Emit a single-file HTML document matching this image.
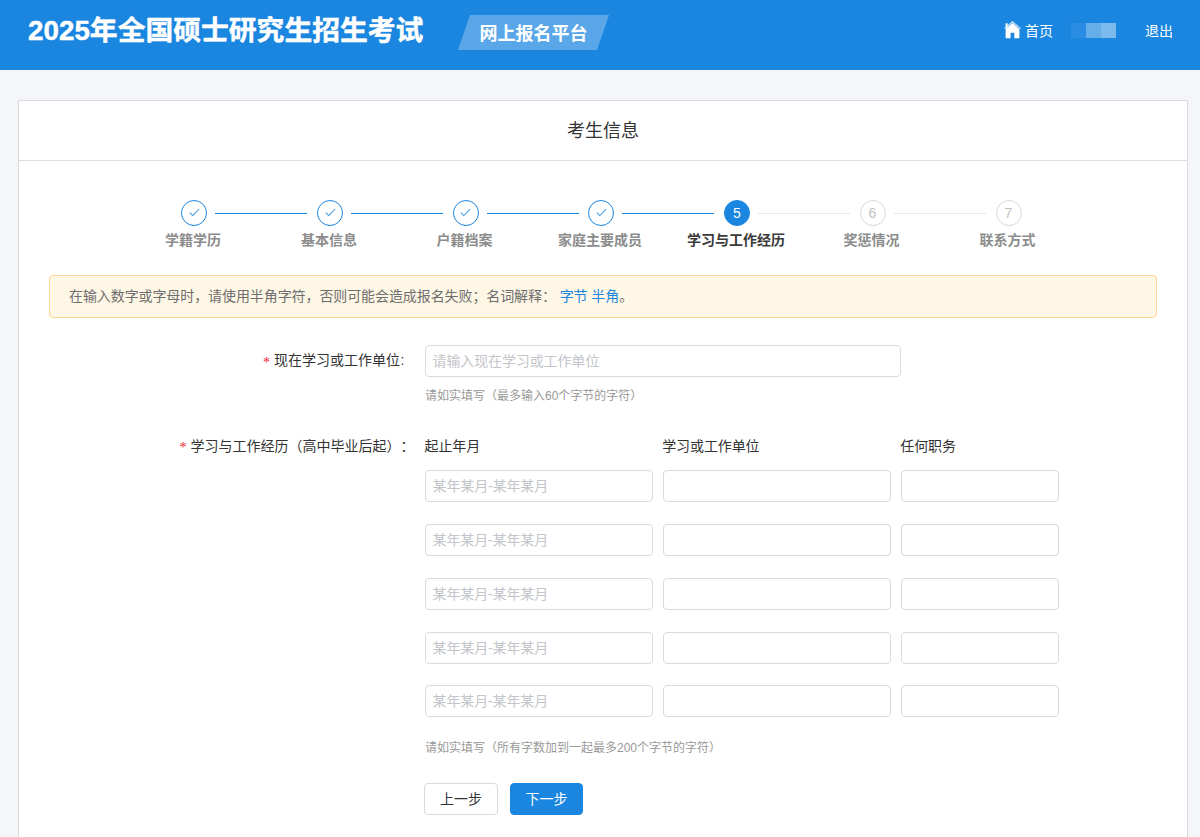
<!DOCTYPE html>
<html lang="zh-CN">
<head>
<meta charset="utf-8">
<title>考生信息 - 网上报名平台</title>
<style>
*{box-sizing:border-box;margin:0;padding:0}
html,body{width:1200px;height:837px;overflow:hidden}
body{background:#f5f6f9;font-family:"Liberation Sans","Noto Sans CJK SC",sans-serif;font-size:14px;color:#333;position:relative;text-spacing-trim:space-all}
a{text-decoration:none;color:#1a86e0}

/* header */
.hd{position:absolute;left:0;top:0;width:1200px;height:70px;background:#1a86e0;color:#fff}
.hd h1{position:absolute;left:28px;top:10px;font-size:27.8px;line-height:42px;font-weight:700;white-space:nowrap;letter-spacing:0;-webkit-text-stroke:0.45px #fff}
.hd .badge{position:absolute;left:464px;top:15px;width:139px;height:35px;background:rgba(255,255,255,.28);transform:skewX(-19deg)}
.hd .badge-t{position:absolute;left:458px;top:17px;width:151px;height:35px;line-height:35px;text-align:center;font-size:18px;font-weight:700;white-space:nowrap}
.hd .nav{position:absolute;top:20px;height:22px;line-height:22px;font-size:14px;color:#fff;white-space:nowrap}
.hd .home{left:1004px}
.hd .home svg{position:absolute;left:0;top:0.5px}
.hd .home span{margin-left:21px}
.hd .out{left:1145px}
.hd .mosaic{position:absolute;left:1071px;top:23px;height:15px;width:45px}
.hd .mosaic i{position:absolute;top:0;height:15px;width:15px}

/* card */
.card{position:absolute;left:18px;top:100px;width:1170px;height:800px;background:#fff;border:1px solid #d9dadd}
.card-h{height:60px;line-height:61px;text-align:center;font-size:18px;color:#333;border-bottom:1px solid #dcdde0}

/* steps */
.steps{position:absolute;left:0;top:0;width:1200px;height:0}
.st{position:absolute;top:200px;width:116px;margin-left:-58px;text-align:center}
.st .ic{display:block;width:26px;height:26px;margin:0 auto;border-radius:50%;border:1px solid #1a86e0;line-height:24px;font-size:14px;color:#1a86e0;background:#fff}
.st .ic svg{display:block;margin:7px auto 0}
.st .tt{display:block;position:relative;left:-1px;margin-top:3px;font-size:14px;line-height:22px;font-weight:700;color:#8c8c8c;white-space:nowrap}
.st.cur .ic{background:#1a86e0;color:#fff}
.st.cur .tt{color:#3a3a3a}
.st.wait .ic{border-color:#d9d9d9;color:#bfbfbf}
.ln{position:absolute;top:213px;height:1px;width:92px;background:#1a86e0}
.ln.w{background:#e8e8e8}

/* alert */
.alert{position:absolute;left:49px;top:275px;width:1108px;height:43px;border:1px solid #ffd591;background:#fff7e6;border-radius:4px;padding-left:19px;line-height:41px;font-size:14px;color:#6e6e6e;white-space:nowrap;letter-spacing:-0.09px}

/* form */
.lab{position:absolute;width:300px;text-align:right;font-size:14px;line-height:32px;color:#333;white-space:nowrap}
.lab b{font-weight:400;color:#f5222d;font-family:"Liberation Serif","Noto Serif CJK SC",serif;margin-right:4px;font-size:14px;position:relative;top:1px}
.inp{position:absolute;height:32px;border:1px solid #d9dbdf;border-radius:4px;background:#fff;padding:0 6.5px;line-height:30px;font-size:14px;color:#c3c5ca;white-space:nowrap;overflow:hidden;letter-spacing:-0.12px}
.hint{position:absolute;left:425px;font-size:12px;line-height:20px;color:#999;white-space:nowrap}
.th{position:absolute;top:430px;font-size:14px;line-height:32px;color:#333;white-space:nowrap;letter-spacing:-0.1px}
.btn{position:absolute;top:783px;width:74px;height:32px;line-height:30px;text-align:center;border:1px solid #d9d9d9;border-radius:4px;background:#fff;font-size:14px;color:#333}
.btn.pri{background:#1a86e0;border-color:#1a86e0;color:#fff}
</style>
</head>
<body>

<div class="hd">
  <h1>2025年全国硕士研究生招生考试</h1>
  <div class="badge"></div>
  <div class="badge-t">网上报名平台</div>
  <a class="nav home" style="color:#fff"><svg width="18" height="18" viewBox="0 0 18 18"><path d="M0.5 7.6 L8.4 0.8 L16.6 7.6" fill="none" stroke="#fff" stroke-opacity=".8" stroke-width="1.1"/><path d="M1.6 2.2 H3.6 V6 L1.6 7.6 Z M1.6 8 L8.4 2.1 L15.4 8 V17.2 H10.3 V11.8 H6.6 V17.2 H1.6 Z" fill="#fff"/></svg><span>首页</span></a>
  <div class="mosaic"><i style="left:0;background:#2a8ce2"></i><i style="left:15px;background:#65aeea"></i><i style="left:30px;background:#7cbaed"></i></div>
  <a class="nav out" style="color:#fff">退出</a>
</div>

<div class="card">
  <div class="card-h">考生信息</div>
</div>

<div class="steps">
  <div class="ln" style="left:215px"></div>
  <div class="ln" style="left:351px"></div>
  <div class="ln" style="left:487px"></div>
  <div class="ln" style="left:622px"></div>
  <div class="ln w" style="left:758px"></div>
  <div class="ln w" style="left:893.5px"></div>

  <div class="st" style="left:194px"><span class="ic"><svg width="11" height="9" viewBox="0 0 11 9"><path d="M0.8 4.6 L3.9 7.6 L10.2 1" fill="none" stroke="#3a96e5" stroke-width="1.05"/></svg></span><span class="tt">学籍学历</span></div>
  <div class="st" style="left:330px"><span class="ic"><svg width="11" height="9" viewBox="0 0 11 9"><path d="M0.8 4.6 L3.9 7.6 L10.2 1" fill="none" stroke="#3a96e5" stroke-width="1.05"/></svg></span><span class="tt">基本信息</span></div>
  <div class="st" style="left:465.5px"><span class="ic"><svg width="11" height="9" viewBox="0 0 11 9"><path d="M0.8 4.6 L3.9 7.6 L10.2 1" fill="none" stroke="#3a96e5" stroke-width="1.05"/></svg></span><span class="tt">户籍档案</span></div>
  <div class="st" style="left:601px"><span class="ic"><svg width="11" height="9" viewBox="0 0 11 9"><path d="M0.8 4.6 L3.9 7.6 L10.2 1" fill="none" stroke="#3a96e5" stroke-width="1.05"/></svg></span><span class="tt">家庭主要成员</span></div>
  <div class="st cur" style="left:737px"><span class="ic">5</span><span class="tt">学习与工作经历</span></div>
  <div class="st wait" style="left:872.5px"><span class="ic">6</span><span class="tt">奖惩情况</span></div>
  <div class="st wait" style="left:1008.5px"><span class="ic">7</span><span class="tt">联系方式</span></div>
</div>

<div class="alert">在输入数字或字母时，请使用半角字符，否则可能会造成报名失败；名词解释： <a>字节</a> <a>半角</a>。</div>

<div class="lab" style="left:104.5px;top:344px"><b style="top:2px">*</b>现在学习或工作单位<span style="margin-left:0.5px">:</span></div>
<div class="inp" style="left:425px;top:345px;width:476px">请输入现在学习或工作单位</div>
<div class="hint" style="top:386px">请如实填写（最多输入60个字节的字符）</div>

<div class="lab" style="left:114.5px;top:430px"><b>*</b>学习与工作经历（高中毕业后起）：</div>
<div class="th" style="left:424.5px">起止年月</div>
<div class="th" style="left:662.2px">学习或工作单位</div>
<div class="th" style="left:900.3px">任何职务</div>

<div class="inp" style="left:425px;top:470px;width:228px">某年某月-某年某月</div><div class="inp" style="left:663px;top:470px;width:228px"></div><div class="inp" style="left:901px;top:470px;width:158px"></div>
<div class="inp" style="left:425px;top:524px;width:228px">某年某月-某年某月</div><div class="inp" style="left:663px;top:524px;width:228px"></div><div class="inp" style="left:901px;top:524px;width:158px"></div>
<div class="inp" style="left:425px;top:578px;width:228px">某年某月-某年某月</div><div class="inp" style="left:663px;top:578px;width:228px"></div><div class="inp" style="left:901px;top:578px;width:158px"></div>
<div class="inp" style="left:425px;top:632px;width:228px">某年某月-某年某月</div><div class="inp" style="left:663px;top:632px;width:228px"></div><div class="inp" style="left:901px;top:632px;width:158px"></div>
<div class="inp" style="left:425px;top:685px;width:228px">某年某月-某年某月</div><div class="inp" style="left:663px;top:685px;width:228px"></div><div class="inp" style="left:901px;top:685px;width:158px"></div>

<div class="hint" style="top:737.5px">请如实填写（所有字数加到一起最多200个字节的字符）</div>

<div class="btn" style="left:424px">上一步</div>
<div class="btn pri" style="left:510px;width:73px">下一步</div>

</body>
</html>
